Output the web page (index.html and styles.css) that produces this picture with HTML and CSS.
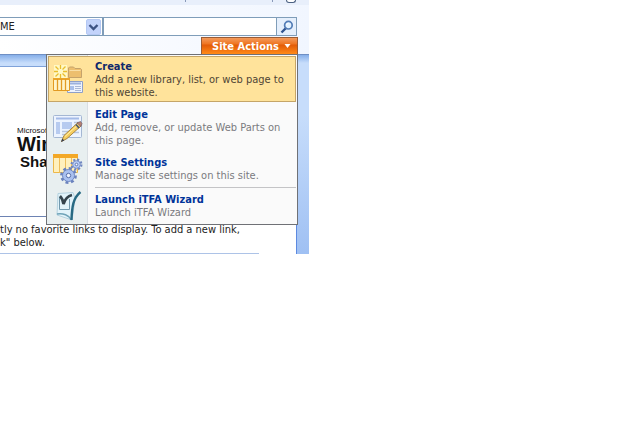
FILE: index.html
```
<!DOCTYPE html>
<html lang="en">
<head>
    <meta charset="UTF-8">
    <title>Home</title>
    <link rel="stylesheet" href="styles.css">
</head>
<body>
    <div class="site">
        <div class="topbar">
            <span class="tick"></span>
            <span class="tick"></span>
            <span class="help"></span>
        </div>
        <form class="search">
            <select class="scope" aria-label="Search scope">
                <option>ME</option>
            </select>
            <svg class="scope-arrow" width="15" height="16" viewBox="0 0 15 16" aria-hidden="true">
                <rect x="0.5" y="0.5" width="14" height="15" rx="1.5" fill="#c3d3fb" stroke="#b4c8f3"/>
                <path d="M3.5 6l4 4 4-4" fill="none" stroke="#3d5384" stroke-width="2.4"/>
            </svg>
            <input class="query" type="text" aria-label="Search">
            <button class="go" type="button" aria-label="Go">
                <svg width="14" height="14" viewBox="0 0 14 14">
                    <path d="M1.5 12.5L6 8" stroke="#31548f" stroke-width="2.4"/>
                    <circle cx="8.4" cy="5.2" r="3.8" fill="#e3f2ff" stroke="#527cb6" stroke-width="1.7"/>
                    <path d="M6.5 5q.3-1.6 2-1.8" fill="none" stroke="#fff"/>
                </svg>
            </button>
        </form>
        <div class="actions">
            <button class="tab" type="button">Site Actions
                <svg width="7" height="4" viewBox="0 0 7 4"><path d="M0.5 0h6L3.5 4z" fill="#fff"/></svg>
            </button>
            <div class="menu">
                <a class="item selected" href="#">
                    <svg class="icon" width="30" height="30" viewBox="0 0 30 30">
                        <rect x="1" width="13" height="13" fill="#fff8c5"/>
                        <path d="M7.5 0v4M7.5 9v4M1 6.5h4M10 6.5h4M2.5 1.5l3 3M9.5 8.5l3 3M12.5 1.5l-3 3M5.5 8.5l-3 3" stroke="#e9bd2e" stroke-width="1.3"/>
                        <path d="M15.5 12.5V3l1-1h4L22 3.5h5.5l1 1v8z" fill="#edbf6e" stroke="#c5a36b"/>
                        <path d="M16.5 5.5h11" stroke="#f9dfa6"/>
                        <path d="M14.5 16.5h15v11h-15z" fill="#eef3fd" stroke="#8e9fc8"/>
                        <path d="M17 18.5h11" stroke="#9cb1dd" stroke-width="2"/>
                        <path d="M17 21h4v4h-4z" fill="#a9bfea"/>
                        <path d="M22 21.5h6M22 23.5h6M22 25.5h6" stroke="#a9b7d6"/>
                        <path d="M.5 13.5h16v12h-16z" fill="#fff4c9" stroke="#e29a22"/>
                        <path d="M0 14h17" stroke="#eba52a" stroke-width="2"/>
                        <path d="M4.5 14v11M8.5 14v11M12.5 14v11" stroke="#e29a22" stroke-width="1.3"/>
                    </svg>
                    <span class="text"><b>Create</b>Add a new library, list, or web page to<br>this website.</span>
                </a>
                <a class="item" href="#">
                    <svg class="icon" width="30" height="30" viewBox="0 0 30 30">
                        <rect x=".5" y="2.5" width="28" height="22" rx="1" fill="#edf4ff" stroke="#a4b7d3"/>
                        <path d="M3 5.5h23" stroke="#a4bbe7" stroke-width="2"/>
                        <path d="M3 9h4v12H3zM9 9h10v7H9z" fill="#b7cbf0"/>
                        <path d="M21 9.5h5M21 12.5h5M21 15.5h4M9 18.5h8M9 21.5h6M21 19.5h5" stroke="#b8c5dd" stroke-width="1.5"/>
                        <path d="M8.5 28.5l2.5-6L25 9.5l3 3.5L14 25.5z" fill="#f5cd60" stroke="#a98743"/>
                        <path d="M12 23.5L26 11" stroke="#fff0aa"/>
                        <path d="M24 10l3.5-1.5 1.5 2-1 3z" fill="#b98174" stroke="#745d63" stroke-width=".7"/>
                        <path d="M23 11.5l3 3.5" stroke="#47556b" stroke-width="1.6"/>
                        <path d="M8 29l1.3-3.5 2 2z" fill="#383f52"/>
                    </svg>
                    <span class="text"><b>Edit Page</b>Add, remove, or update Web Parts on<br>this page.</span>
                </a>
                <a class="item" href="#">
                    <svg class="icon" width="30" height="30" viewBox="0 0 30 30">
                        <path d="M.5.5h24v18H.5z" fill="#fff0bd" stroke="#edb849"/>
                        <path d="M0 2h25" stroke="#f3a827" stroke-width="4"/>
                        <path d="M6.5 4v15M12.5 4v15M18.5 4v15" stroke="#edbd5c"/>
                        <circle cx="23.5" cy="10.5" r="4.8" fill="none" stroke="#6f86c0" stroke-width="2.4" stroke-dasharray="2 1.77"/>
                        <circle cx="23.5" cy="10.5" r="3.8" fill="#b6cbf5" stroke="#7b92cb"/>
                        <circle cx="23.5" cy="10.5" r="1.3" fill="#fff" stroke="#6178b1"/>
                        <circle cx="15.5" cy="21.5" r="7" fill="none" stroke="#6a82bd" stroke-width="2.8" stroke-dasharray="2.9 2.598"/>
                        <circle cx="15.5" cy="21.5" r="6" fill="#a9c0ef" stroke="#7089c4"/>
                        <circle cx="15.5" cy="21.5" r="2.2" fill="#f1f5ff" stroke="#5870aa"/>
                    </svg>
                    <span class="text"><b>Site Settings</b>Manage site settings on this site.</span>
                </a>
                <div class="separator"></div>
                <a class="item" href="#">
                    <svg class="icon" width="30" height="30" viewBox="0 0 30 30">
                        <path d="M5 2.5l15-1 2 6-2 15-1 6.500-15-5z" fill="#e2f3fa" stroke="#b5d2df"/>
                        <path d="M4 23c6-1 12 1 14.5 6" fill="none" stroke="#6fa3b8" stroke-width="1.5"/>
                        <path d="M6.5 6v12.5h10V8" fill="none" stroke="#7299ae"/>
                        <path d="M7 5c2 2 3 5 3.5 8C12 8 15 5 19 4" fill="none" stroke="#35444d" stroke-width="2.7"/>
                        <path d="M27.5 1C20 7 19 16 18.5 29" fill="none" stroke="#286982" stroke-width="2.4"/>
                    </svg>
                    <span class="text"><b>Launch iTFA Wizard</b>Launch iTFA Wizard</span>
                </a>
            </div>
        </div>
        <div class="body">
            <div class="content">
                <div class="logo">
                    <div class="brand">Microsoft</div>
                    <div class="windows">Win</div>
                    <div class="share">Share</div>
                </div>
                <p class="links">tly no favorite links to display. To add a new link,<br>k" below.</p>
                <div class="rule"></div>
            </div>
        </div>
    </div>
</body>
</html>
```
FILE: styles.css
```
body {
    margin: 0;
    background: #fff;
    color: #222;
    font-family: Tahoma, "DejaVu Sans Condensed", sans-serif;
    font-size: 11px;
    line-height: 13px;
}
.site {
    max-width: 309px;
    background: linear-gradient(to right, #fff, #f1f6ff);
}
.topbar {
    display: flex;
    justify-content: flex-end;
    height: 5px;
    padding-right: 13px;
    background: #e8effb;
}
.tick {
    width: 1px;
    height: 2px;
    margin-right: 86px;
    background: #8999b9;
}
.tick + .tick {
    margin-right: 13px;
}
.help {
    box-sizing: border-box;
    width: 10px;
    height: 3px;
    border: 1px solid #4b6183;
    border-top: none;
    border-radius: 0 0 4px 4px;
    background: #fff;
}
.search {
    display: flex;
    height: 19px;
    margin: 12px 12px 1px 0;
    box-sizing: border-box;
    border: 1px solid #7f9db9;
    border-left: none;
    background: #fff;
}
.scope {
    appearance: none;
    width: 86px;
    padding: 0;
    border: none;
    background: #fff;
    color: #222;
    font: inherit;
}
.scope-arrow {
    margin: 1px 1px 0 0;
    pointer-events: none;
}
.query {
    flex: 1;
    min-width: 0;
    padding: 0 3px;
    border: none;
    border-left: 2px solid #7f9db9;
    font: inherit;
}
.go {
    display: flex;
    align-items: center;
    justify-content: center;
    width: 20px;
    padding: 0;
    border: none;
    border-left: 1px solid #7f9db9;
    background: #e5effc;
}
.actions {
    position: relative;
    display: flex;
    justify-content: flex-end;
    padding-right: 11px;
}
.tab {
    display: flex;
    align-items: center;
    justify-content: center;
    gap: 5px;
    box-sizing: border-box;
    width: 97px;
    height: 17px;
    padding: 0 0 0 4px;
    border: 1px solid #9b5c35;
    border-bottom: none;
    background: linear-gradient(#f39a5c, #ef7725 35%, #e35c08 45%, #ff8a18);
    color: #fff;
    font: inherit;
    font-weight: bold;
}
/* drops over the page, under the tab */
.menu {
    position: absolute;
    z-index: 1;
    top: 100%;
    right: 11px;
    box-sizing: border-box;
    width: 252px;
    padding: 1px;
    border: 1px solid #6f7176;
    background: linear-gradient(to right, #e8eff0 40px, #d9dee3 40px, #d9dee3 41px, #fafafa 41px);
}
.item {
    display: flex;
    align-items: center;
    margin-bottom: 2px;
    padding: 3px 4px 2px;
    border: 1px solid transparent;
    color: #7b7b80;
    text-decoration: none;
}
.item:last-child {
    margin-bottom: 1px;
}
.selected {
    border-color: #c5a567;
    background: #ffe39b;
    color: #4f4535;
}
.icon {
    flex: none;
    margin: -4px 12px -4px 0;
}
.text {
    white-space: nowrap;
}
.text b {
    display: block;
    color: #003399;
}
.selected b {
    color: #10296b;
}
.separator {
    height: 1px;
    margin: 0 0 1px 47px;
    background: #c4c4c6;
}
.body {
    padding: 11px 12px 0 0;
    border-top: 1px solid #6f8fc4;
    background: linear-gradient(#86afe9, #c7ddfb 8px, #c7ddfb 60px, #9fc0f3);
}
.content {
    border-top: 1px solid #7fa2d9;
    border-right: 1px solid #5d8ae0;
    background: #fff;
}
.logo {
    box-sizing: border-box;
    height: 150px;
    padding: 59px 0 0 17px;
    border-bottom: 1px solid #6d83b3;
    color: #111;
    font-family: "Liberation Sans", Arial, sans-serif;
}
.brand {
    font-size: 8px;
    line-height: 9px;
}
.windows {
    font-size: 20px;
    font-weight: bold;
    line-height: 19px;
}
.share {
    padding-left: 3px;
    font-size: 15px;
    font-weight: bold;
    line-height: 15px;
}
.links {
    margin: 0;
    padding: 6px 0 4px;
    white-space: nowrap;
}
.rule {
    height: 1px;
    margin-right: 37px;
    background: #adc3e7;
}
```
